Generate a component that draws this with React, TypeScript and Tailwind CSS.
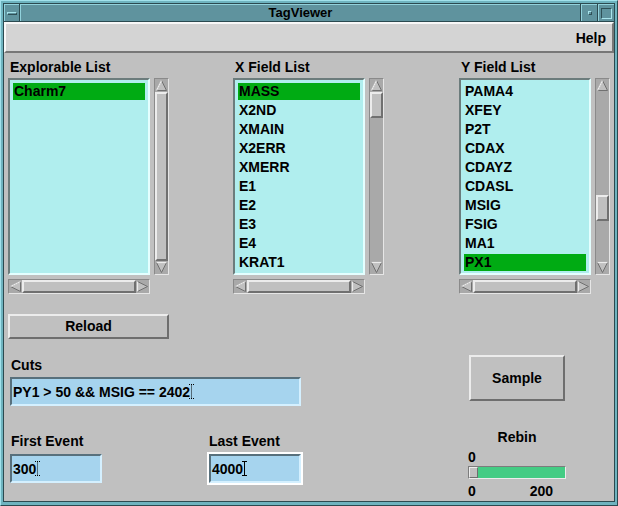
import React from "react";

// TagViewer – Motif style window

const xItems = ["MASS", "X2ND", "XMAIN", "X2ERR", "XMERR", "E1", "E2", "E3", "E4", "KRAT1"];
const yItems = ["PAMA4", "XFEY", "P2T", "CDAX", "CDAYZ", "CDASL", "MSIG", "FSIG", "MA1", "PX1"];

function Arrow({ dir }: { dir: "up" | "down" | "left" | "right" }) {
  const pts = {
    up: "6.5,1.5 11.5,11.5 1.5,11.5",
    down: "1.5,1.5 11.5,1.5 6.5,11.5",
    left: "1.5,6.5 11.5,1.5 11.5,11.5",
    right: "1.5,1.5 11.5,6.5 1.5,11.5",
  }[dir];
  const light = {
    up: "M1.5 11.5 L6.5 1.5",
    down: "M1.5 1.5 L11.5 1.5",
    left: "M1.5 6.5 L11.5 1.5",
    right: "M1.5 1.5 L1.5 11.5",
  }[dir];
  return (
    <svg width="13" height="13" viewBox="0 0 13 13" className="shrink-0">
      <polygon points={pts} fill="#c0c0c0" stroke="#707070" strokeWidth="1" />
      <path d={light} stroke="#ececec" strokeWidth="1.2" fill="none" />
    </svg>
  );
}

function Thumb({ className }: { className: string }) {
  return (
    <div
      className={`bg-[#c0c0c0] border-2 border-t-[#ececec] border-l-[#ececec] border-b-[#707070] border-r-[#707070] ${className}`}
    />
  );
}

function VScroll({ top, size }: { top: number; size: number }) {
  return (
    <div className="w-[15px] h-[197px] flex flex-col bg-[#a9a9a9] border border-t-[#8a8a8a] border-l-[#8a8a8a] border-b-[#e6e6e6] border-r-[#e6e6e6]">
      <Arrow dir="up" />
      <div className="flex-1 flex flex-col">
        <div style={{ height: top }} />
        <div style={{ height: size }} className="flex">
          <Thumb className="flex-1" />
        </div>
      </div>
      <Arrow dir="down" />
    </div>
  );
}

function HScroll({ w }: { w: string }) {
  return (
    <div className={`${w} h-[15px] mt-[4px] flex bg-[#a9a9a9] border border-t-[#8a8a8a] border-l-[#8a8a8a] border-b-[#e6e6e6] border-r-[#e6e6e6]`}>
      <Arrow dir="left" />
      <Thumb className="flex-1" />
      <Arrow dir="right" />
    </div>
  );
}

function ListBox({ items, selected, w }: { items: string[]; selected: string; w: string }) {
  return (
    <div
      className={`${w} h-[197px] bg-[#b0eeee] border-2 border-t-[#6c7c7c] border-l-[#6c7c7c] border-b-[#e4ffff] border-r-[#e4ffff] px-[3px] pt-[2px] overflow-hidden`}
    >
      {items.map((it) => (
        <div key={it} className="h-[19px] py-[1px]">
          <div className={`h-[17px] leading-[17px] pl-[1px] ${it === selected ? "bg-[#00ab13]" : ""}`}>{it}</div>
        </div>
      ))}
    </div>
  );
}

function Column({
  label,
  items,
  selected,
  listW,
  thumbTop,
  thumbSize,
  className,
}: {
  label: string;
  items: string[];
  selected: string;
  listW: string;
  thumbTop: number;
  thumbSize: number;
  className: string;
}) {
  return (
    <div className={className}>
      <div className="h-[16px] leading-[16px] pl-[2px] mb-[3px]">{label}</div>
      <div className="flex gap-[4px]">
        <ListBox items={items} selected={selected} w={listW} />
        <VScroll top={thumbTop} size={thumbSize} />
      </div>
      <HScroll w={listW} />
    </div>
  );
}

function Cursor({ active }: { active: boolean }) {
  return (
    <svg width="5" height="15" viewBox="0 0 5 15" className="shrink-0 -ml-[1px]">
      <path
        d="M0 0.5 H5 M2.5 0.5 V14.5 M0 14.5 H5"
        stroke="#000"
        strokeWidth="1"
        strokeDasharray={active ? undefined : "1 1"}
        fill="none"
      />
    </svg>
  );
}

function Field({ value, w, focused }: { value: string; w: string; focused?: boolean }) {
  return (
    <div className={`${w} h-[33px] border-2 ${focused ? "border-white" : "border-[#c0c0c0]"}`}>
      <div className="h-full bg-[#a6d4ee] border-2 border-t-[#58707c] border-l-[#58707c] border-b-[#d4f0ff] border-r-[#d4f0ff] flex items-center pl-[1px]">
        <span className="leading-[16px]">{value}</span>
        <Cursor active={!!focused} />
      </div>
    </div>
  );
}

function Button({ label, className }: { label: string; className: string }) {
  return (
    <div
      className={`bg-[#c0c0c0] border-2 border-t-[#ececec] border-l-[#ececec] border-b-[#6e6e6e] border-r-[#6e6e6e] flex items-center justify-center ${className}`}
    >
      {label}
    </div>
  );
}

export default function App() {
  return (
    <div className="w-[618px] h-[506px] bg-[#6eb3bf] border border-t-[#a2e2ec] border-l-[#a2e2ec] border-b-[#2b4a50] border-r-[#2b4a50] px-[2px] pt-[2px] pb-[3px] flex font-['Liberation_Sans',Arial,sans-serif] font-bold text-[14px] text-black">
      <div className="flex-1 flex flex-col border border-[#2b4a50]">
        {/* title bar */}
        <div className="h-[18px] flex bg-[#5f939e] border-b border-[#2b4a50]">
          <div className="w-[15px] border-t border-l border-t-[#92d2dc] border-l-[#92d2dc] flex items-center justify-center">
            <div className="w-[10px] h-[3px] border border-t-[#a8e4ec] border-l-[#a8e4ec] border-b-[#2f5057] border-r-[#2f5057]" />
          </div>
          <div className="flex-1 border-l border-[#2b4a50]">
            <div className="h-full border-t border-l border-t-[#92d2dc] border-l-[#92d2dc] text-center text-[13px] leading-[16px]">
              TagViewer
            </div>
          </div>
          <div className="w-[17px] border-l border-[#2b4a50]">
            <div className="h-full border-t border-l border-t-[#92d2dc] border-l-[#92d2dc] flex items-center justify-center">
              <div className="w-[4px] h-[4px] border border-t-[#a8e4ec] border-l-[#a8e4ec] border-b-[#2f5057] border-r-[#2f5057]" />
            </div>
          </div>
          <div className="w-[17px] border-l border-[#2b4a50]">
            <div className="h-full border-t border-l border-t-[#92d2dc] border-l-[#92d2dc] flex items-center justify-center">
              <div className="w-[11px] h-[11px] border border-t-[#2f5057] border-l-[#2f5057] border-b-[#a8e4ec] border-r-[#a8e4ec]" />
            </div>
          </div>
        </div>

        {/* body */}
        <div className="flex-1 bg-[#c0c0c0] flex flex-col">
          <div className="h-[31px] bg-[#d4d4d4] border-2 border-t-[#f8f8f8] border-l-[#f8f8f8] border-b-[#777] border-r-[#777] flex items-center justify-end pr-[6px]">
            <span className="leading-[16px]">Help</span>
          </div>

          <div className="flex mt-[6px]">
            <Column
              className="ml-[4px]"
              label="Explorable List"
              items={["Charm7"]}
              selected="Charm7"
              listW="w-[142px]"
              thumbTop={0}
              thumbSize={169}
            />
            <Column
              className="ml-[64px]"
              label="X Field List"
              items={xItems}
              selected="MASS"
              listW="w-[132px]"
              thumbTop={0}
              thumbSize={26}
            />
            <Column
              className="ml-[75px]"
              label="Y Field List"
              items={yItems}
              selected="PX1"
              listW="w-[132px]"
              thumbTop={103}
              thumbSize={26}
            />
          </div>

          <div className="flex">
            <div className="ml-[4px] w-[295px] flex flex-col">
              <Button label="Reload" className="mt-[20px] w-[161px] h-[25px]" />
              <div className="mt-[18px] h-[16px] leading-[16px] pl-[3px]">Cuts</div>
              <div className="mt-[2px]">
                <Field value="PY1 > 50 && MSIG == 2402" w="w-[295px]" />
              </div>
              <div className="mt-[25px] flex">
                <div className="w-[96px]">
                  <div className="h-[16px] leading-[16px] pl-[3px]">First Event</div>
                  <div className="mt-[3px]">
                    <Field value="300" w="w-[96px]" />
                  </div>
                </div>
                <div className="ml-[103px] w-[96px]">
                  <div className="h-[16px] leading-[16px] pl-[2px] whitespace-nowrap">Last Event</div>
                  <div className="mt-[3px]">
                    <Field value="4000" w="w-[96px]" focused />
                  </div>
                </div>
              </div>
            </div>

            <div className="ml-[165px] w-[98px] flex flex-col">
              <Button label="Sample" className="mt-[61px] ml-[1px] w-[96px] h-[46px]" />
              <div className="mt-[28px] h-[16px] leading-[16px] text-center">Rebin</div>
              <div className="mt-[4px] h-[16px] leading-[16px]">0</div>
              <div className="mt-[1px] h-[13px] bg-[#44cc84] border border-t-[#7c7c7c] border-l-[#7c7c7c] border-b-[#ececec] border-r-[#ececec] flex">
                <div className="w-[9px] bg-[#c0c0c0] border border-t-[#ececec] border-l-[#ececec] border-b-[#6e6e6e] border-r-[#6e6e6e]" />
              </div>
              <div className="mt-[4px] h-[16px] leading-[16px] flex justify-between pr-[13px]">
                <span>0</span>
                <span>200</span>
              </div>
            </div>
          </div>
        </div>
      </div>
    </div>
  );
}
